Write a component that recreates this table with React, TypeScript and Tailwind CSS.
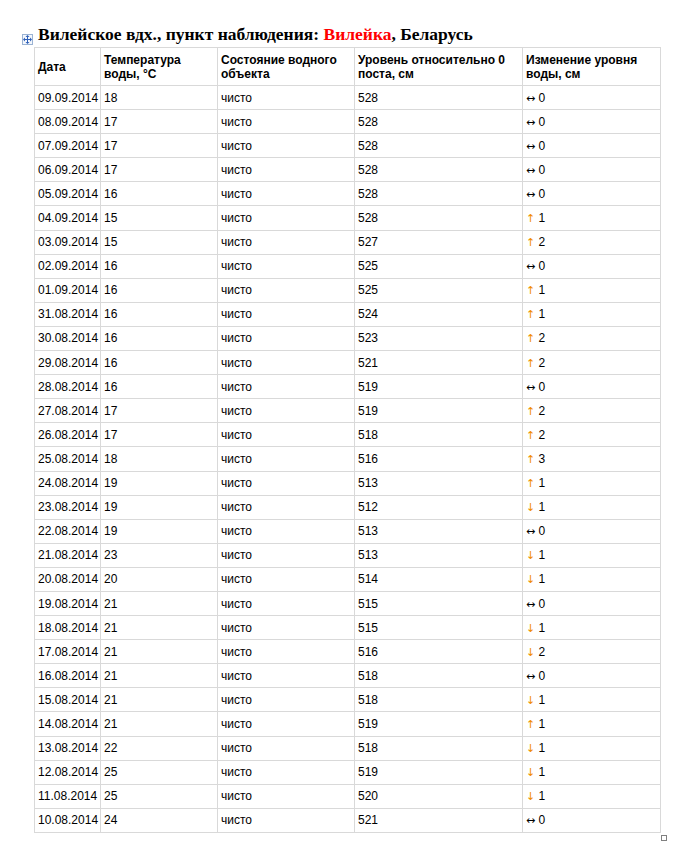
import React from "react";

type Row = [string, string, string, string];

const rows: Row[] = [
  ["09.09.2014", "18", "528", "=0"],
  ["08.09.2014", "17", "528", "=0"],
  ["07.09.2014", "17", "528", "=0"],
  ["06.09.2014", "17", "528", "=0"],
  ["05.09.2014", "16", "528", "=0"],
  ["04.09.2014", "15", "528", "+1"],
  ["03.09.2014", "15", "527", "+2"],
  ["02.09.2014", "16", "525", "=0"],
  ["01.09.2014", "16", "525", "+1"],
  ["31.08.2014", "16", "524", "+1"],
  ["30.08.2014", "16", "523", "+2"],
  ["29.08.2014", "16", "521", "+2"],
  ["28.08.2014", "16", "519", "=0"],
  ["27.08.2014", "17", "519", "+2"],
  ["26.08.2014", "17", "518", "+2"],
  ["25.08.2014", "18", "516", "+3"],
  ["24.08.2014", "19", "513", "+1"],
  ["23.08.2014", "19", "512", "-1"],
  ["22.08.2014", "19", "513", "=0"],
  ["21.08.2014", "23", "513", "-1"],
  ["20.08.2014", "20", "514", "-1"],
  ["19.08.2014", "21", "515", "=0"],
  ["18.08.2014", "21", "515", "-1"],
  ["17.08.2014", "21", "516", "-2"],
  ["16.08.2014", "21", "518", "=0"],
  ["15.08.2014", "21", "518", "-1"],
  ["14.08.2014", "21", "519", "+1"],
  ["13.08.2014", "22", "518", "-1"],
  ["12.08.2014", "25", "519", "-1"],
  ["11.08.2014", "25", "520", "-1"],
  ["10.08.2014", "24", "521", "=0"],
];

const arrowFont = { fontFamily: '"DejaVu Sans", sans-serif' };

// "=" no change, "+" rise, "-" fall
const Change = ({ v }: { v: string }) => {
  const sign = v[0];
  const num = v.slice(1);
  if (sign === "=")
    return (
      <span>
        <span className="text-[11px] leading-none" style={arrowFont}>↔</span> {num}
      </span>
    );
  return (
    <span>
      <span className="text-[11px] leading-none text-[#f08c00]" style={arrowFont}>
        {sign === "+" ? "↑" : "↓"}
      </span>{" "}
      {num}
    </span>
  );
};

const MoveHandle = () => (
  <div className="absolute left-[-12px] top-[-13px] w-[11px] h-[11px] border border-[#9bb3d3] bg-[#f4f7fc] flex items-center justify-center">
    <svg width="9" height="9" viewBox="0 0 9 9" fill="#2d5fb8">
      <rect x="4" y="1.5" width="1" height="6" />
      <rect x="1.5" y="4" width="6" height="1" />
      <path d="M4.5 0 L6.5 2 L2.5 2 Z" />
      <path d="M4.5 9 L6.5 7 L2.5 7 Z" />
      <path d="M0 4.5 L2 2.5 L2 6.5 Z" />
      <path d="M9 4.5 L7 2.5 L7 6.5 Z" />
    </svg>
  </div>
);

export default function App() {
  const cell = "border border-[#d9d9d9] pl-[3px] pr-[2px] align-middle h-[24.1px] p-0";
  const head = "border border-[#d9d9d9] pl-[3px] pr-[2px] align-middle text-left font-bold leading-[14px] p-0";

  return (
    <div className="w-[680px] h-[848px] bg-white pl-[34px] pt-[24px]">
      <h1
        className="ml-[4px] mb-[3px] text-[17.5px] leading-[20px] font-bold text-black"
        style={{ fontFamily: '"Liberation Serif", "Times New Roman", serif' }}
      >
        Вилейское вдх., пункт наблюдения: <span className="text-[#ff0000]">Вилейка</span>, Беларусь
      </h1>
      <div className="relative w-[626px]">
        <MoveHandle />
        <table
          className="w-[626px] border-collapse table-fixed text-[12px] text-black"
          style={{ fontFamily: '"Liberation Sans", Arial, sans-serif' }}
        >
          <colgroup>
            <col className="w-[66px]" />
            <col className="w-[117px]" />
            <col className="w-[137px]" />
            <col className="w-[168px]" />
            <col className="w-[138px]" />
          </colgroup>
          <thead>
            <tr className="h-[38px]">
              <th className={head}>Дата</th>
              <th className={head}>Температура<br />воды, °С</th>
              <th className={head}>Состояние водного<br />объекта</th>
              <th className={head}>Уровень относительно 0<br />поста, см</th>
              <th className={head}>Изменение уровня<br />воды, см</th>
            </tr>
          </thead>
          <tbody>
            {rows.map((r) => (
              <tr key={r[0]}>
                <td className={cell + " whitespace-nowrap"}>{r[0]}</td>
                <td className={cell}>{r[1]}</td>
                <td className={cell}>чисто</td>
                <td className={cell}>{r[2]}</td>
                <td className={cell}><Change v={r[3]} /></td>
              </tr>
            ))}
          </tbody>
        </table>
        <div className="absolute right-[-7px] bottom-[-8px] w-[6px] h-[6px] border border-[#808080] bg-white" />
      </div>
    </div>
  );
}
